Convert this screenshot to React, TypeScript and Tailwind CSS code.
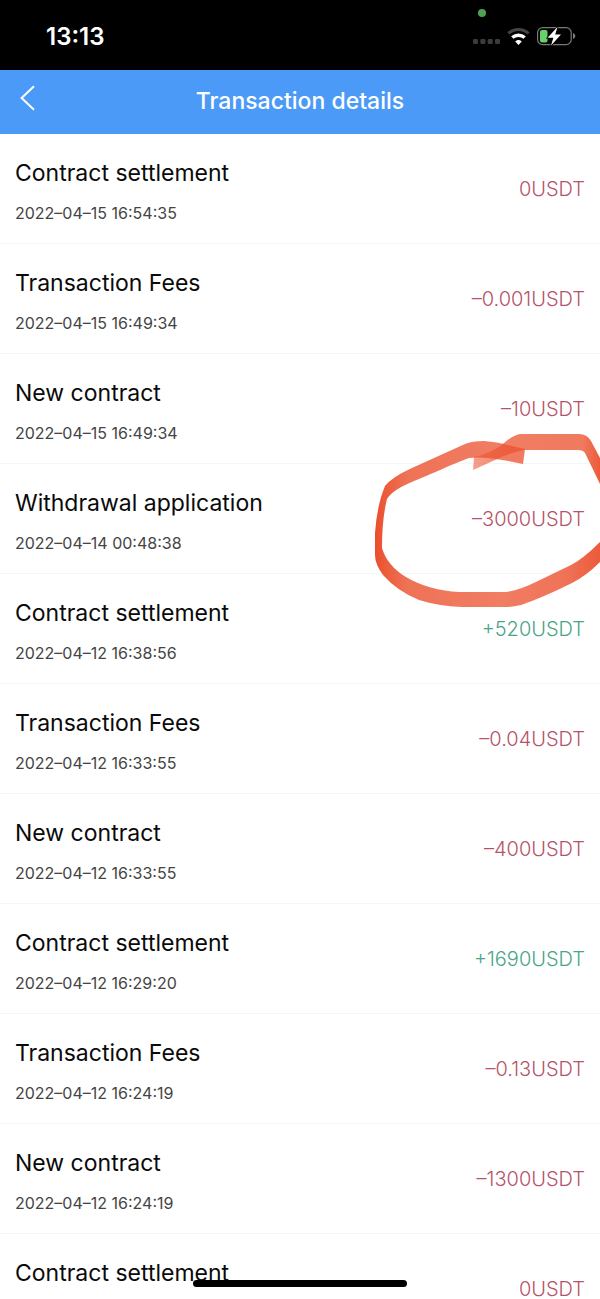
import React from 'react';

interface Transaction {
  id: number;
  title: string;
  time: string;
  amount: string;
}

const transactions: Transaction[] = [
  { id: 1, title: 'Contract settlement', time: '2022–04–15 16:54:35', amount: '0USDT' },
  { id: 2, title: 'Transaction Fees', time: '2022–04–15 16:49:34', amount: '–0.001USDT' },
  { id: 3, title: 'New contract', time: '2022–04–15 16:49:34', amount: '–10USDT' },
  { id: 4, title: 'Withdrawal application', time: '2022–04–14 00:48:38', amount: '–3000USDT' },
  { id: 5, title: 'Contract settlement', time: '2022–04–12 16:38:56', amount: '+520USDT' },
  { id: 6, title: 'Transaction Fees', time: '2022–04–12 16:33:55', amount: '–0.04USDT' },
  { id: 7, title: 'New contract', time: '2022–04–12 16:33:55', amount: '–400USDT' },
  { id: 8, title: 'Contract settlement', time: '2022–04–12 16:29:20', amount: '+1690USDT' },
  { id: 9, title: 'Transaction Fees', time: '2022–04–12 16:24:19', amount: '–0.13USDT' },
  { id: 10, title: 'New contract', time: '2022–04–12 16:24:19', amount: '–1300USDT' },
  { id: 11, title: 'Contract settlement', time: '', amount: '0USDT' },
];

const StatusBar: React.FC = () => (
  <div className="relative flex h-[70px] shrink-0 items-center justify-between bg-black pl-[46px] pr-6 pt-1 text-white">
    <span className="text-[24px] font-semibold leading-8">13:13</span>

    {/* Camera in use */}
    <span className="absolute right-[114px] top-[9px] size-2 rounded-full bg-[#4fa253]" />

    <div className="flex items-center">
      <svg viewBox="0 0 104 24" className="h-6 w-[104px]" fill="none" aria-hidden="true">
        {/* No signal */}
        <g fill="#3c3c3c">
          <rect x="1" y="14" width="5" height="5" rx="1.2" />
          <rect x="8.4" y="14" width="5" height="5" rx="1.2" />
          <rect x="15.7" y="14" width="5" height="5" rx="1.2" />
          <rect x="23" y="14" width="5" height="5" rx="1.2" />
        </g>
        {/* Wifi */}
        <path d="M36.4 8.4 A15 15 0 0 1 56.6 8.4" stroke="#444" strokeWidth="3" />
        <path d="M40.3 12.6 A9.3 9.3 0 0 1 52.7 12.6" stroke="#fff" strokeWidth="3.4" />
        <path d="M43.2 16.4 Q46.5 13.8 49.8 16.4 L46.5 20 Z" fill="#fff" />
        {/* Battery */}
        <rect x="65.6" y="2.6" width="33.6" height="17" rx="5" stroke="#7a7a7a" strokeWidth="1.2" />
        <path d="M101 8 Q103.4 9 103.4 11 T101 14 Z" fill="#7a7a7a" />
        <rect x="68" y="5" width="7.5" height="12.4" rx="2" fill="#67d069" />
        <path d="M85.6 1.8 L75.6 12.8 H81.4 L79 20.6 L89 9.6 H83.2 Z" fill="#fff" stroke="#000" strokeWidth="1.6" paintOrder="stroke" />
      </svg>
    </div>
  </div>
);

const Header: React.FC = () => (
  <header className="grid h-16 shrink-0 grid-cols-[64px_1fr_64px] items-center bg-[#4b9af7] text-white">
    <button type="button" aria-label="Back" className="flex h-full items-center pb-2 pl-5">
      <svg viewBox="0 0 15 26" className="h-[26px] w-[15px]" fill="none" stroke="currentColor" strokeWidth="2" aria-hidden="true">
        <path d="M14 1.2 L1.6 13 L14 24.8" />
      </svg>
    </button>
    <h1 className="pb-0.5 text-center text-[23px] font-medium leading-8">Transaction details</h1>
  </header>
);

const TransactionRow: React.FC<{ item: Transaction }> = ({ item }) => {
  const isIncome = item.amount.startsWith('+');

  return (
    <li className="flex h-[110px] shrink-0 items-center justify-between border-b border-[#f5f5f5] px-[15px]">
      <div className="flex h-full flex-col gap-3 pt-[23px]">
        <p className="text-[23px] leading-8 text-[#0a0a0a]">{item.title}</p>
        <p className="text-base leading-6 text-[#444]">{item.time}</p>
      </div>
      <span className={`text-[20px] font-light leading-8 ${isIncome ? 'text-[#4aa586]' : 'text-[#b5536a]'}`}>
        {item.amount}
      </span>
    </li>
  );
};

// Marker stroke drawn by hand around the withdrawal
const MarkerCircle: React.FC = () => (
  <svg viewBox="0 0 240 200" className="pointer-events-none absolute right-0 top-[420px] h-[200px] w-60" aria-hidden="true">
    <defs>
      <linearGradient id="ink" gradientUnits="userSpaceOnUse" x1="15" y1="0" x2="240" y2="0">
        <stop offset="0" stopColor="#e94824" stopOpacity="0.97" />
        <stop offset="0.04" stopColor="#ea4c28" stopOpacity="0.92" />
        <stop offset="0.14" stopColor="#ea4f2c" stopOpacity="0.8" />
        <stop offset="0.55" stopColor="#ec5432" stopOpacity="0.76" />
        <stop offset="0.85" stopColor="#ec5432" stopOpacity="0.82" />
        <stop offset="1" stopColor="#ea4c28" stopOpacity="0.92" />
      </linearGradient>
      <linearGradient id="inkTail" gradientUnits="userSpaceOnUse" x1="113" y1="0" x2="240" y2="0">
        <stop offset="0" stopColor="#ec5432" stopOpacity="0.55" />
        <stop offset="0.3" stopColor="#ec5432" stopOpacity="0.76" />
        <stop offset="0.86" stopColor="#ec5432" stopOpacity="0.78" />
        <stop offset="1" stopColor="#ea4c28" stopOpacity="0.92" />
      </linearGradient>
    </defs>
    <path
      d="M165 29 L163 44 Q145 40 128 38 Q118 37 109 38 C92 44 72 54 54 61 C42 66 31 72 27 79 Q22 99 22 128 C25 139 34 150 46 157 C61 166 80 171 99 172 L146 172 Q158 171 180 160 L211 145 Q223 139 240 122 L240 142 Q226 156 212 163 Q184 177 161 185 Q153 187 145 187 L102 187 Q78 186 59 180 Q37 171 23 155 Q15 144 15 135 L15 113 Q17 85 25 66 Q32 57 52 48 L105 24 Q112 21 124 21 Q138 22 148 25 Z"
      fill="url(#ink)"
    />
    <path
      d="M113 50 L114 37 Q132 33 144 23 Q154 14 162 14 L219 14 Q227 14 231 21 L240 38 L240 64 L225 33 Q223 30 218 30 L163 30 Q150 33 135 40 Z"
      fill="url(#inkTail)"
    />
  </svg>
);

export default function App() {
  return (
    <div className="relative flex h-screen flex-col overflow-hidden bg-white font-['Inter',sans-serif]">
      <StatusBar />
      <Header />
      <ul className="flex min-h-0 flex-1 flex-col overflow-hidden">
        {transactions.map((item) => (
          <TransactionRow key={item.id} item={item} />
        ))}
      </ul>
      <MarkerCircle />

      {/* Home indicator */}
      <div className="absolute bottom-3 left-1/2 h-[7px] w-[214px] -translate-x-1/2 rounded-full bg-black" />
    </div>
  );
}
